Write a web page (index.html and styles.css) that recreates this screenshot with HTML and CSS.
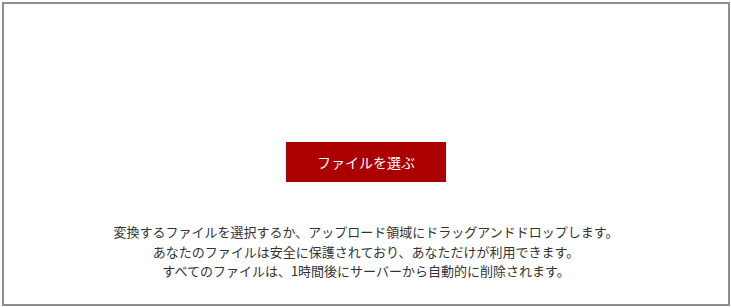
FILE: index.html
```html
<!DOCTYPE html>
<html lang="ja">

<head>
    <meta charset="UTF-8">
    <meta name="viewport" content="width=device-width, initial-scale=1.0">
    <title>ファイルを選ぶ</title>
    <link rel="stylesheet" href="styles.css">
</head>

<body>
    <div class="dropzone">
        <button class="btn">ファイルを選ぶ</button>

        <div class="notes">
            <p>変換するファイルを選択するか、アップロード領域にドラッグアンドドロップします。</p>
            <p>あなたのファイルは安全に保護されており、あなただけが利用できます。</p>
            <p>すべてのファイルは、1時間後にサーバーから自動的に削除されます。</p>
        </div>
    </div>
</body>

</html>
```

FILE: styles.css
```css
/* General Styling */
body {
    margin: 0;
    padding: 0;
    font-family: 'Noto Sans CJK JP', 'Noto Sans', sans-serif;
    background: #fff;
    color: #333;
}

.dropzone {
    box-sizing: border-box;
    width: 728px;
    height: 304px;
    margin: 2px 1px 1px 2px;
    border: 2px solid #8e8e8e;
    padding-top: 138px;
    display: flex;
    flex-direction: column;
    align-items: center;
}

.btn {
    width: 160px;
    height: 40px;
    background: #aa0000;
    color: #fff;
    border: none;
    font-family: inherit;
    font-size: 14px;
    cursor: pointer;
    padding: 0;
}

.notes {
    margin-top: 40px;
    text-align: center;
    font-size: 13px;
    line-height: 19.5px;
}

.notes p {
    margin: 0;
}
```
